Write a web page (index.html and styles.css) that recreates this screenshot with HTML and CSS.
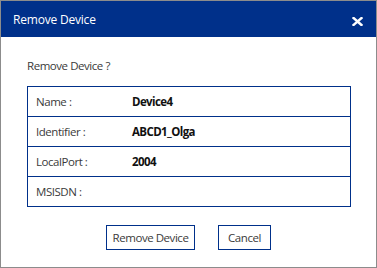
FILE: index.html
```html
<!DOCTYPE html>
<html lang="en">
<head>
  <meta charset="UTF-8" />
  <title>Remove Device</title>
  <link rel="stylesheet" href="styles.css">
</head>
<body>
  <div class="dialog">
    <div class="dialog-header">
      <span class="dialog-title">Remove Device</span>
      <button class="close-btn" aria-label="Close">
        <svg width="11" height="9" viewBox="0 0 11 9">
          <path d="M1.5 1 L9.5 8 M9.5 1 L1.5 8" stroke="#fff" stroke-width="2.4" stroke-linecap="square"/>
        </svg>
      </button>
    </div>
    <div class="dialog-body">
      <p class="question">Remove Device ?</p>
      <table class="info">
        <tr><td class="label">Name :</td><td class="value">Device4</td></tr>
        <tr><td class="label">Identifier :</td><td class="value">ABCD1_Olga</td></tr>
        <tr><td class="label">LocalPort :</td><td class="value">2004</td></tr>
        <tr><td class="label">MSISDN :</td><td class="value"></td></tr>
      </table>
      <div class="actions">
        <button class="btn btn-remove">Remove Device</button>
        <button class="btn btn-cancel">Cancel</button>
      </div>
    </div>
  </div>
</body>
</html>
```
FILE: styles.css
```css
:root {
  --navy: #00308a;
  --frame: #8c8c8c;
  --text: #3a3a3a;
}

body {
  margin: 0;
  font-family: 'Open Sans', sans-serif;
  background: white;
}

.dialog {
  width: 377px;
  height: 268px;
  box-sizing: border-box;
  border: 1px solid var(--frame);
  background: white;
}

.dialog-header {
  height: 36px;
  background: var(--navy);
  display: flex;
  align-items: center;
  justify-content: space-between;
  padding: 0 13px 0 12px;
}

.dialog-title {
  color: white;
  font-size: 12px;
  letter-spacing: -0.2px;
  margin-top: 0;
}

.close-btn {
  background: none;
  border: none;
  padding: 0;
  display: flex;
  margin-top: 5px;
}

.dialog-body {
  padding: 22px 25px 0 26px;
}

.question {
  margin: 0 0 13px;
  font-size: 11.5px;
  letter-spacing: -0.45px;
  color: var(--text);
  line-height: 14px;
}

.info {
  width: 324px;
  border-collapse: collapse;
  border: 1px solid var(--navy);
}

.info td {
  height: 29px;
  padding: 0;
  border-top: 1px solid var(--navy);
  font-size: 11.5px;
  letter-spacing: -0.45px;
  line-height: 14px;
}

.info .label {
  width: 96px;
  padding-left: 8px;
  color: var(--text);
}

.info .value {
  font-weight: 700;
  letter-spacing: -0.6px;
  color: #111;
}

.actions {
  display: flex;
  justify-content: center;
  gap: 23px;
  margin-top: 18px;
  margin-left: -1px;
}

.btn {
  height: 25px;
  border: 1px solid var(--navy);
  background: white;
  color: var(--text);
  font-family: 'Open Sans', sans-serif;
  font-size: 11.5px;
  letter-spacing: -0.45px;
  padding: 0;
}

.btn-remove { width: 89px; }
.btn-cancel { width: 53px; }
```
